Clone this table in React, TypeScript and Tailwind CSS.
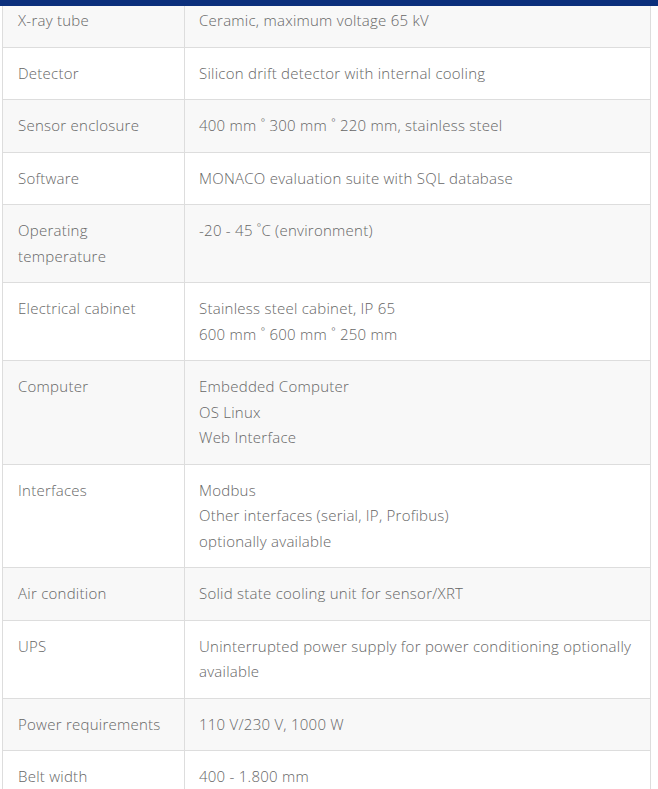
const rows: [string, string[]][] = [
  ["X-ray tube", ["Ceramic, maximum voltage 65 kV"]],
  ["Detector", ["Silicon drift detector with internal cooling"]],
  ["Sensor enclosure", ["400 mm ˚ 300 mm ˚ 220 mm, stainless steel"]],
  ["Software", ["MONACO evaluation suite with SQL database"]],
  ["Operating temperature", ["-20 - 45 ˚C (environment)"]],
  ["Electrical cabinet", ["Stainless steel cabinet, IP 65", "600 mm ˚ 600 mm ˚ 250 mm"]],
  ["Computer", ["Embedded Computer", "OS Linux", "Web Interface"]],
  ["Interfaces", ["Modbus", "Other interfaces (serial, IP, Profibus)", "optionally available"]],
  ["Air condition", ["Solid state cooling unit for sensor/XRT"]],
  ["UPS", ["Uninterrupted power supply for power conditioning optionally available"]],
  ["Power requirements", ["110 V/230 V, 1000 W"]],
  ["Belt width", ["400 - 1.800 mm"]],
];

export default function App() {
  return (
    <div className="w-[658px] h-[789px] overflow-hidden bg-white font-['Open_Sans',sans-serif] font-light text-[15px] leading-[25.5px] tracking-[0.25px] text-[#666]">
      <div className="relative z-10 h-[6px] bg-[#0b2f7c]" />
      <table className="-mt-[12px] ml-[2px] w-[649px] border-collapse">
        <tbody>
          {rows.map(([label, lines], i) => (
            <tr key={label} className={i % 2 === 0 ? "bg-[#f8f8f8]" : "bg-white"}>
              <td className="w-[182px] border border-[#dddddd] px-[15px] py-[13px] align-top">
                {label}
              </td>
              <td className="border border-[#dddddd] px-[14px] py-[13px] align-top">
                {lines.map((l) => (
                  <div key={l}>{l}</div>
                ))}
              </td>
            </tr>
          ))}
        </tbody>
      </table>
    </div>
  );
}
